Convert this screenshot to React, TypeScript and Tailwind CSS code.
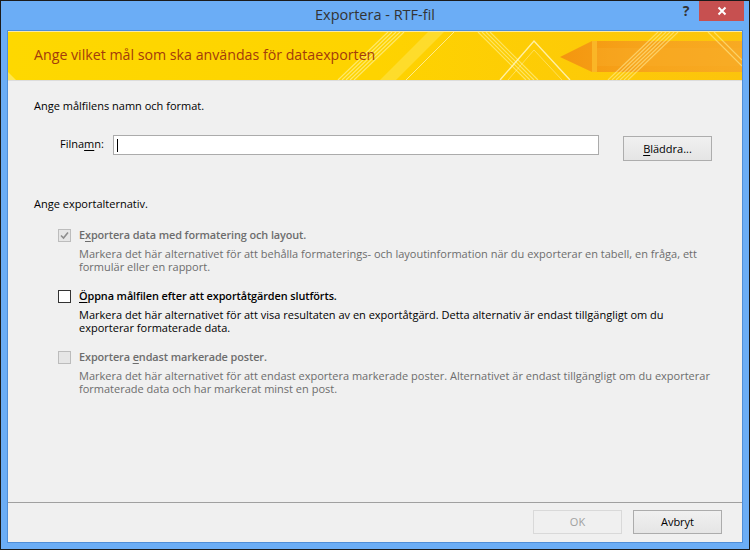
import React from "react";

const FONT = { fontFamily: '"Segoe UI", "Open Sans", "Noto Sans", sans-serif' };

function Banner() {
  return (
    <div className="relative h-[50px] border-t border-t-[#fbe9a0] border-b border-b-[#dcdcdc] bg-gradient-to-r from-[#fed800] via-[#fed300] to-[#fcc40c] overflow-hidden">
      <svg className="absolute inset-0" width="734" height="48" viewBox="0 0 734 48">
        <defs>
          <linearGradient id="band" x1="0" y1="0" x2="1" y2="0">
            <stop offset="0" stopColor="#f4960f" />
            <stop offset="0.5" stopColor="#f7a51c" />
            <stop offset="1" stopColor="#f8aa22" />
          </linearGradient>
        </defs>
        <polygon points="0,40 0,48 8,48" fill="#fff3a0" opacity="0.5" />
        <g stroke="#fff7b0" strokeOpacity="0.6" strokeWidth="1.2">
          <line x1="330" y1="48" x2="380" y2="0" />
          <line x1="334" y1="48" x2="384" y2="0" />
          <line x1="338" y1="48" x2="388" y2="0" />
          <line x1="342" y1="48" x2="392" y2="0" />
          <line x1="346" y1="48" x2="396" y2="0" />
        </g>
        <polygon points="372,48 420,0 436,0 388,48" fill="#fff07a" opacity="0.35" />
        <line x1="398" y1="48" x2="446" y2="0" stroke="#fff8c0" strokeOpacity="0.7" strokeWidth="1" />
        <g stroke="#fff7b0" strokeOpacity="0.55" strokeWidth="1.2">
          <line x1="470" y1="0" x2="518" y2="48" />
          <line x1="474" y1="0" x2="522" y2="48" />
          <line x1="478" y1="0" x2="526" y2="48" />
          <line x1="482" y1="0" x2="530" y2="48" />
        </g>
        <polyline points="492,48 526,9 562,48" fill="none" stroke="#fff6c0" strokeOpacity="0.85" strokeWidth="1.4" />
        <polyline points="500,48 526,18 554,48" fill="none" stroke="#fff6c0" strokeOpacity="0.45" strokeWidth="1" />
        <polygon points="552,25 584,9 734,9 734,40 584,40" fill="url(#band)" />
        <rect x="584" y="9" width="5" height="31" fill="#fbbd2c" opacity="0.8" />
        <rect x="589" y="16" width="145" height="18" fill="#f9b02a" opacity="0.35" />
        <g stroke="#fff0a0" strokeOpacity="0.55" strokeWidth="1.2">
          <line x1="600" y1="48" x2="650" y2="0" />
          <line x1="604" y1="48" x2="654" y2="0" />
          <line x1="608" y1="48" x2="658" y2="0" />
          <line x1="612" y1="48" x2="662" y2="0" />
          <line x1="616" y1="48" x2="666" y2="0" />
          <line x1="620" y1="48" x2="670" y2="0" />
        </g>
        <g stroke="#fff4a0" strokeOpacity="0.55" strokeWidth="1.2">
          <line x1="700" y1="0" x2="734" y2="34" />
          <line x1="706" y1="0" x2="734" y2="28" />
        </g>
      </svg>
      <div
        className="relative pl-[26px] pt-[13px] text-[14.2px] leading-[20px] text-[#a33b0c]"
        style={FONT}
      >
        Ange vilket mål som ska användas för dataexporten
      </div>
    </div>
  );
}

function Check({ kind }: { kind: "disabledChecked" | "enabled" | "disabled" }) {
  if (kind === "enabled") {
    return <div className="w-[13px] h-[13px] border border-[#333333] bg-white shrink-0" />;
  }
  return (
    <div className="w-[13px] h-[13px] border border-[#bcbcbc] bg-[#e6e6e6] shrink-0 flex items-center justify-center">
      {kind === "disabledChecked" && (
        <svg width="9" height="9" viewBox="0 0 9 9">
          <polyline points="1,4.5 3.5,7 8,1.5" fill="none" stroke="#8d8d8d" strokeWidth="1.6" />
        </svg>
      )}
    </div>
  );
}

function Option({
  kind,
  title,
  lines,
  dim,
  mt,
}: {
  kind: "disabledChecked" | "enabled" | "disabled";
  title: React.ReactNode;
  lines: string[];
  dim: boolean;
  mt: string;
}) {
  const color = dim ? "text-[#6d6d6d]" : "text-black";
  return (
    <div className={`${mt} pl-[50px]`}>
      <div className="flex items-center h-[16px] gap-[8px]">
        <Check kind={kind} />
        <div className={`font-semibold text-[10.9px] tracking-[-0.1px] leading-[16px] ${color}`}>{title}</div>
      </div>
      <div className={`pl-[21px] mt-[4px] text-[11px] leading-[13px] ${color}`}>
        {lines.map((l, i) => (
          <div key={i}>{l}</div>
        ))}
      </div>
    </div>
  );
}

export default function App() {
  return (
    <div
      className="w-[750px] h-[550px] border border-[#1b1b1b] bg-[#6badf6] flex flex-col px-[6px] pb-[6px]"
      style={FONT}
    >
      <div className="relative h-[29px] shrink-0 flex items-center justify-center">
        <div className="text-[14.5px] text-[#333333] pb-[1px]">Exportera - RTF-fil</div>
        <div className="absolute right-[-1px] top-0 flex items-start">
          <div className="w-[26px] h-[20px] flex items-center justify-center text-[14px] font-bold text-[#333333] leading-none">?</div>
          <div className="w-[45px] h-[20px] bg-[#c75050] flex items-center justify-center">
            <svg width="10" height="10" viewBox="0 0 10 10">
              <path d="M1.5 1.5 L8.5 8.5 M8.5 1.5 L1.5 8.5" stroke="white" strokeWidth="2" />
            </svg>
          </div>
        </div>
      </div>
      <div className="flex-1 border border-[#4f8ed8] bg-[#f0f0f0] flex flex-col">
        <Banner />
        <div className="flex-1 flex flex-col text-[11px] text-black">
          <div className="mt-[17px] pl-[26px] leading-[16px]">Ange målfilens namn och format.</div>
          <div className="mt-[21px] flex items-start">
            <div className="pl-[52px] w-[105px] pt-[1px] leading-[16px]">
              Filna<span className="underline underline-offset-2">m</span>n:
            </div>
            <div className="w-[486px] h-[20px] border border-[#ababab] bg-white flex items-center pl-[3px]">
              <div className="w-[1px] h-[13px] bg-black" />
            </div>
            <div className="ml-[24px] mt-[1px] w-[89px] h-[25px] border border-[#adadad] bg-gradient-to-b from-[#f0f0f0] to-[#e5e5e5] flex items-center justify-center leading-none">
              <span>
                <span className="underline underline-offset-2">B</span>läddra...
              </span>
            </div>
          </div>
          <div className="mt-[35px] pl-[26px] leading-[16px]">Ange exportalternativ.</div>
          <Option
            kind="disabledChecked"
            mt="mt-[15px]"
            dim
            title={
              <>
                E<span className="underline underline-offset-2">x</span>portera data med formatering och layout.
              </>
            }
            lines={[
              "Markera det här alternativet för att behålla formaterings- och layoutinformation när du exporterar en tabell, en fråga, ett",
              "formulär eller en rapport.",
            ]}
          />
          <Option
            kind="enabled"
            mt="mt-[15px]"
            dim={false}
            title={
              <>
                <span className="underline underline-offset-2">Ö</span>ppna målfilen efter att exportåtgärden slutförts.
              </>
            }
            lines={[
              "Markera det här alternativet för att visa resultaten av en exportåtgärd. Detta alternativ är endast tillgängligt om du",
              "exporterar formaterade data.",
            ]}
          />
          <Option
            kind="disabled"
            mt="mt-[15px]"
            dim
            title={
              <>
                Exportera <span className="underline underline-offset-2">e</span>ndast markerade poster.
              </>
            }
            lines={[
              "Markera det här alternativet för att endast exportera markerade poster. Alternativet är endast tillgängligt om du exporterar",
              "formaterade data och har markerat minst en post.",
            ]}
          />
          <div className="flex-1" />
          <div className="h-[1px] bg-[#a0a0a0]" />
          <div className="h-[39px] flex items-start justify-end pt-[7px] pr-[20px] gap-[11px]">
            <div className="w-[89px] h-[24px] border border-[#d9d9d9] bg-[#f0f0f0] flex items-center justify-center text-[#a0a0a0]">
              OK
            </div>
            <div className="w-[89px] h-[24px] border border-[#acacac] bg-gradient-to-b from-[#f0f0f0] to-[#e5e5e5] flex items-center justify-center text-black">
              Avbryt
            </div>
          </div>
        </div>
      </div>
    </div>
  );
}
